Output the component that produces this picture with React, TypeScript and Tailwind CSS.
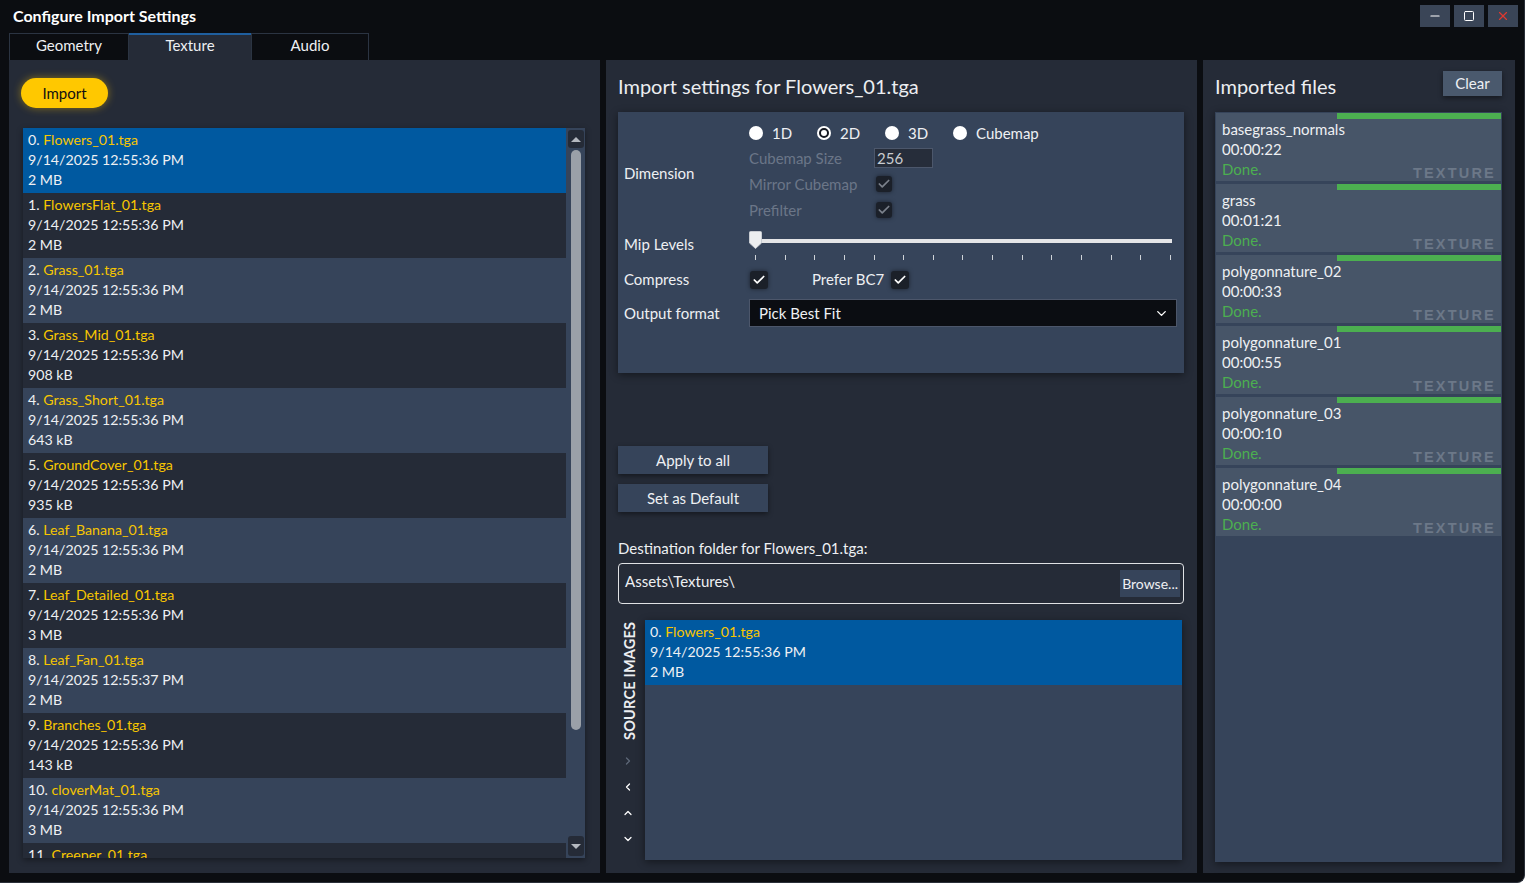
import { Check, ChevronDown, ChevronLeft, ChevronRight, ChevronUp, Minus, Square, X } from "lucide-react";

interface SourceFile {
  name: string;
  date: string;
  size: string;
}

const files: SourceFile[] = [
  { name: "Flowers_01.tga", date: "9/14/2025 12:55:36 PM", size: "2 MB" },
  { name: "FlowersFlat_01.tga", date: "9/14/2025 12:55:36 PM", size: "2 MB" },
  { name: "Grass_01.tga", date: "9/14/2025 12:55:36 PM", size: "2 MB" },
  { name: "Grass_Mid_01.tga", date: "9/14/2025 12:55:36 PM", size: "908 kB" },
  { name: "Grass_Short_01.tga", date: "9/14/2025 12:55:36 PM", size: "643 kB" },
  { name: "GroundCover_01.tga", date: "9/14/2025 12:55:36 PM", size: "935 kB" },
  { name: "Leaf_Banana_01.tga", date: "9/14/2025 12:55:36 PM", size: "2 MB" },
  { name: "Leaf_Detailed_01.tga", date: "9/14/2025 12:55:36 PM", size: "3 MB" },
  { name: "Leaf_Fan_01.tga", date: "9/14/2025 12:55:37 PM", size: "2 MB" },
  { name: "Branches_01.tga", date: "9/14/2025 12:55:36 PM", size: "143 kB" },
  { name: "cloverMat_01.tga", date: "9/14/2025 12:55:36 PM", size: "3 MB" },
  { name: "Creeper_01.tga", date: "9/14/2025 12:55:36 PM", size: "1 MB" },
];

const imported = [
  { name: "basegrass_normals", time: "00:00:22" },
  { name: "grass", time: "00:01:21" },
  { name: "polygonnature_02", time: "00:00:33" },
  { name: "polygonnature_01", time: "00:00:55" },
  { name: "polygonnature_03", time: "00:00:10" },
  { name: "polygonnature_04", time: "00:00:00" },
];

function FileRow({ file, index, selected }: { file: SourceFile; index: number; selected?: boolean }) {
  const bg = selected ? "bg-[#0059a0]" : index % 2 === 1 ? "bg-[#252b37]" : "bg-[#36445a]";
  return (
    <div className={`h-[65px] shrink-0 px-[5px] pt-[2px] leading-[20px] text-[14.2px] ${bg}`}>
      <div>
        {index}. <span className="text-[#f7c600]">{file.name}</span>
      </div>
      <div>{file.date}</div>
      <div>{file.size}</div>
    </div>
  );
}

function CheckBox({ disabled, size = "w-[18px] h-[18px]" }: { disabled?: boolean; size?: string }) {
  return (
    <div className={`${size} shrink-0 flex items-center justify-center rounded-[3px] bg-[#1b2029] shadow-[0_0_4px_rgba(0,0,0,0.5)]`}>
      <Check className={`w-[14px] h-[14px] ${disabled ? "text-[#7b818b]" : "text-white"}`} strokeWidth={3} />
    </div>
  );
}

function Radio({ label, checked, last }: { label: string; checked?: boolean; last?: boolean }) {
  return (
    <div className={`${last ? "" : "w-[68px]"} flex items-center gap-[9px] shrink-0`}>
      <div className="w-[14px] h-[14px] shrink-0 rounded-full bg-white flex items-center justify-center">
        {checked && <div className="w-[10px] h-[10px] rounded-full border-[2px] border-[#141820] bg-white" />}
      </div>
      <span className="whitespace-nowrap">{label}</span>
    </div>
  );
}

export default function App() {
  return (
    <div className="w-[1525px] h-[883px] bg-[#0b0d11] text-[#eef0f3] text-[15px] font-['Lato',sans-serif] flex flex-col overflow-hidden rounded-br-[8px] border-r border-b border-[#2a2f38]">
      {/* Title bar */}
      <div className="h-[33px] flex justify-between shrink-0">
        <div className="pl-[13px] pt-[4px] text-[16px] font-bold text-white">Configure Import Settings</div>
        <div className="flex gap-[4px] pt-[5px] pr-[6px]">
          <div className="w-[30px] h-[22px] bg-[#3a4557] flex items-center justify-center">
            <Minus className="w-[14px] h-[14px] text-white" />
          </div>
          <div className="w-[30px] h-[22px] bg-[#3a4557] flex items-center justify-center">
            <Square className="w-[12px] h-[12px] text-white" strokeWidth={2} />
          </div>
          <div className="w-[30px] h-[22px] bg-[#3a4557] flex items-center justify-center">
            <X className="w-[14px] h-[14px] text-[#e0392f]" />
          </div>
        </div>
      </div>

      {/* Tabs */}
      <div className="h-[27px] flex pl-[9px] shrink-0">
        <div className="w-[120px] flex items-center justify-center pb-[3px] border border-b-0 border-[#2b3442]">Geometry</div>
        <div className="w-[122px] flex items-center justify-center pb-[4px] bg-[#252b37] border-t-2 border-[#1f5f9f]">Texture</div>
        <div className="w-[118px] flex items-center justify-center pb-[3px] border border-b-0 border-[#2b3442]">Audio</div>
      </div>

      {/* Panels */}
      <div className="flex gap-[6px] pl-[9px] h-[813px]">
        {/* Left panel */}
        <div className="w-[591px] bg-[#252b37] flex flex-col pl-[12px] pr-[15px] pt-[18px] pb-[15px]">
          <button className="w-[87px] h-[30px] rounded-full bg-[#ffc800] text-[#111] shadow-[0_0_8px_rgba(255,200,0,0.45)]">
            Import
          </button>
          <div className="ml-[2px] mt-[20px] flex-1 flex bg-[#36445a] overflow-hidden shadow-[0_2px_6px_rgba(0,0,0,0.4)]">
            <div className="flex-1 flex flex-col overflow-hidden">
              {files.map((f, i) => (
                <FileRow key={f.name} file={f} index={i} selected={i === 0} />
              ))}
            </div>
            <div className="w-[19px] flex flex-col items-center py-[2px] bg-[#36445a]">
              <div className="w-[16px] h-[18px] rounded-[3px] bg-[#252b37] flex items-center justify-center">
                <div className="w-0 h-0 border-l-[5px] border-r-[5px] border-b-[5px] border-l-transparent border-r-transparent border-b-[#b4b8bf]" />
              </div>
              <div className="w-[10px] h-[580px] mt-[2px] rounded-full bg-[#9aa0a8]" />
              <div className="flex-1" />
              <div className="w-[16px] h-[20px] rounded-[3px] bg-[#252b37] flex items-center justify-center">
                <div className="w-0 h-0 border-l-[5px] border-r-[5px] border-t-[5px] border-l-transparent border-r-transparent border-t-[#b4b8bf]" />
              </div>
            </div>
          </div>
        </div>

        {/* Middle panel */}
        <div className="w-[591px] bg-[#252b37] flex flex-col pl-[12px] pr-[13px] pb-[13px]">
          <div className="h-[52px] flex items-center text-[20px] text-[#eceef1]">Import settings for Flowers_01.tga</div>

          {/* Settings box */}
          <div className="h-[261px] bg-[#36445a] shadow-[0_2px_8px_rgba(0,0,0,0.45)] pl-[6px] pr-[6px] pt-[11px] flex flex-col">
            <div className="flex">
              <div className="w-[125px] flex items-center">Dimension</div>
              <div className="flex flex-col">
                <div className="h-[20px] flex items-center">
                  <Radio label="1D" />
                  <Radio label="2D" checked />
                  <Radio label="3D" />
                  <Radio label="Cubemap" last />
                </div>
                <div className="h-[26px] mt-[2px] flex items-center text-[#6b7688]">
                  <span className="w-[125px]">Cubemap Size</span>
                  <div className="w-[59px] h-[20px] bg-[#262d3a] border border-[#4c576b] text-[#c9ccd1] pl-[2px] leading-[18px]">256</div>
                </div>
                <div className="h-[26px] flex items-center text-[#6b7688]">
                  <span className="w-[127px]">Mirror Cubemap</span>
                  <CheckBox disabled size="w-[16px] h-[16px]" />
                </div>
                <div className="h-[26px] flex items-center text-[#6b7688]">
                  <span className="w-[127px]">Prefilter</span>
                  <CheckBox disabled size="w-[16px] h-[16px]" />
                </div>
              </div>
            </div>

            <div className="h-[34px] mt-[4px] flex">
              <div className="w-[125px] flex items-center">Mip Levels</div>
              <div className="w-[423px] relative">
                <div className="absolute left-0 right-0 top-[12px] h-[4px] bg-[#e4e5e7]" />
                <svg className="absolute left-0 top-[4px]" width="13" height="18" viewBox="0 0 13 18">
                  <path d="M0.5 1.5 Q0.5 0.5 1.5 0.5 H11.5 Q12.5 0.5 12.5 1.5 V12 L6.5 17.5 L0.5 12 Z" fill="#eceef0" stroke="#c8ccd2" />
                </svg>
                <div className="absolute left-[6px] right-[1px] top-[28px] flex justify-between">
                  {Array.from({ length: 15 }).map((_, i) => (
                    <div key={i} className="w-[1px] h-[5px] bg-[#cfd3d8]" />
                  ))}
                </div>
              </div>
            </div>

            <div className="h-[28px] mt-[4px] flex items-center pt-[1px]">
              <div className="w-[126px]">Compress</div>
              <CheckBox />
              <span className="ml-[44px] mr-[7px]">Prefer BC7</span>
              <CheckBox />
            </div>

            <div className="h-[28px] mt-[6px] flex items-center">
              <div className="w-[125px]">Output format</div>
              <div className="w-[428px] h-[28px] bg-[#0b0d12] border border-[#4c566a] flex items-center justify-between pl-[9px] pr-[7px]">
                <span>Pick Best Fit</span>
                <ChevronDown className="w-[15px] h-[15px] text-white" strokeWidth={2.2} />
              </div>
            </div>
          </div>

          <button className="mt-[73px] w-[150px] h-[28px] bg-[#36445a] shadow-[0_2px_5px_rgba(0,0,0,0.45)]">Apply to all</button>
          <button className="mt-[10px] w-[150px] h-[28px] bg-[#36445a] shadow-[0_2px_5px_rgba(0,0,0,0.45)]">Set as Default</button>

          <div className="mt-[26px] h-[20px] leading-[20px]">Destination folder for Flowers_01.tga:</div>
          <div className="mt-[5px] h-[41px] border border-[#dfe1e4] rounded-[4px] flex justify-between pl-[6px] pr-[3px]">
            <span className="pt-[6px]">Assets\Textures\</span>
            <div className="mt-[6px] h-[27px] px-[2px] bg-[#36445a] flex items-center text-[14px]">Browse...</div>
          </div>

          <div className="mt-[16px] flex-1 flex">
            <div className="w-[27px] flex flex-col items-start pt-[1px]">
              <div className="h-[120px] w-[24px] flex items-center justify-center">
                <span className="-rotate-90 whitespace-nowrap font-bold text-[14.5px] text-[#eceef1] tracking-[0.2px]">SOURCE IMAGES</span>
              </div>
              <ChevronRight className="ml-[4px] mt-[14px] w-[12px] h-[12px] text-[#5e6878]" strokeWidth={2.5} />
              <ChevronLeft className="ml-[4px] mt-[14px] w-[12px] h-[12px] text-white" strokeWidth={2.5} />
              <ChevronUp className="ml-[4px] mt-[14px] w-[12px] h-[12px] text-white" strokeWidth={2.5} />
              <ChevronDown className="ml-[4px] mt-[14px] w-[12px] h-[12px] text-white" strokeWidth={2.5} />
            </div>
            <div className="flex-1 mr-[2px] bg-[#36445a] shadow-[0_2px_8px_rgba(0,0,0,0.45)]">
              <FileRow file={files[0]} index={0} selected />
            </div>
          </div>
        </div>

        {/* Right panel */}
        <div className="w-[312px] bg-[#252b37] flex flex-col pl-[12px] pr-[13px] pb-[11px]">
          <div className="h-[52px] flex items-center justify-between">
            <span className="text-[20px] text-[#eceef1]">Imported files</span>
            <button className="mb-[5px] w-[59px] h-[25px] bg-[#4a596d] shadow-[0_2px_5px_rgba(0,0,0,0.45)]">Clear</button>
          </div>
          <div className="flex-1 bg-[#36445a] flex flex-col gap-[3px] pt-[1px] px-[1px] shadow-[0_2px_8px_rgba(0,0,0,0.45)]">
            {imported.map((f) => (
              <div key={f.name} className="h-[68px] bg-[#475568] flex flex-col">
                <div className="flex justify-end">
                  <div className="w-[164px] h-[6px] bg-[#4caf50]" />
                </div>
                <div className="pl-[6px] leading-[20px]">
                  <div>{f.name}</div>
                  <div>{f.time}</div>
                  <div className="flex justify-between items-end">
                    <span className="text-[#4caf50]">Done.</span>
                    <span className="pr-[5px] text-[14.5px] font-bold tracking-[2.2px] text-[#6c7888] font-['Liberation_Sans',sans-serif] leading-[14px] translate-y-[1px]">TEXTURE</span>
                  </div>
                </div>
              </div>
            ))}
          </div>
        </div>
      </div>
    </div>
  );
}
